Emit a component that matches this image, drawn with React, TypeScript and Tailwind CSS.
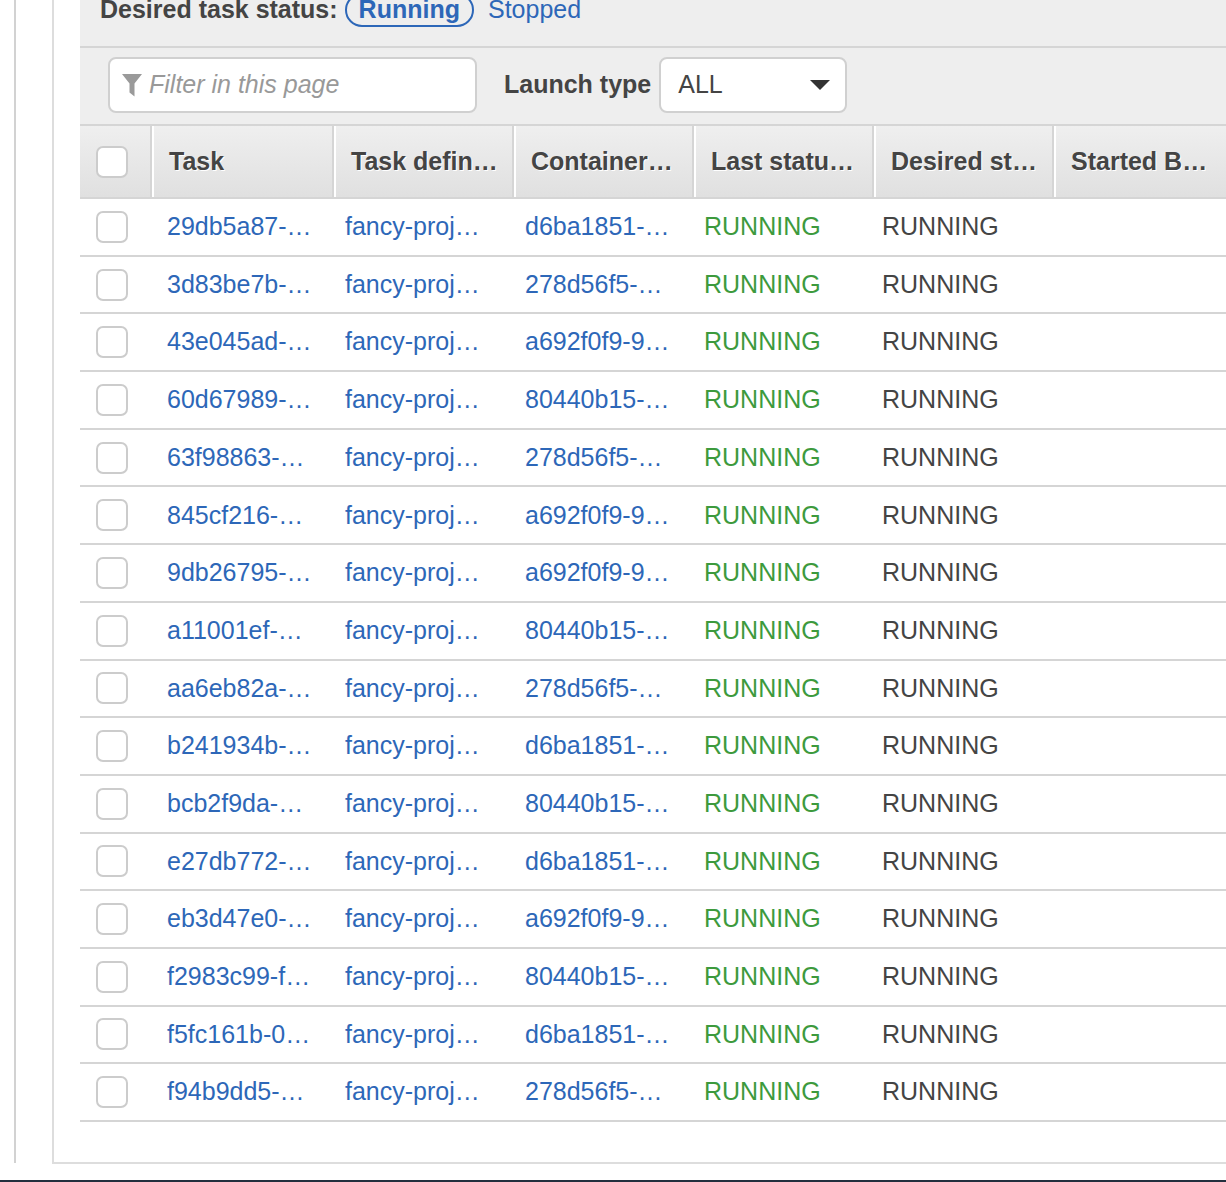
import React from "react";

const rows: [string, string, string][] = [
  ["29db5a87-…", "fancy-proj…", "d6ba1851-…"],
  ["3d83be7b-…", "fancy-proj…", "278d56f5-…"],
  ["43e045ad-…", "fancy-proj…", "a692f0f9-9…"],
  ["60d67989-…", "fancy-proj…", "80440b15-…"],
  ["63f98863-…", "fancy-proj…", "278d56f5-…"],
  ["845cf216-…", "fancy-proj…", "a692f0f9-9…"],
  ["9db26795-…", "fancy-proj…", "a692f0f9-9…"],
  ["a11001ef-…", "fancy-proj…", "80440b15-…"],
  ["aa6eb82a-…", "fancy-proj…", "278d56f5-…"],
  ["b241934b-…", "fancy-proj…", "d6ba1851-…"],
  ["bcb2f9da-…", "fancy-proj…", "80440b15-…"],
  ["e27db772-…", "fancy-proj…", "d6ba1851-…"],
  ["eb3d47e0-…", "fancy-proj…", "a692f0f9-9…"],
  ["f2983c99-f…", "fancy-proj…", "80440b15-…"],
  ["f5fc161b-0…", "fancy-proj…", "d6ba1851-…"],
  ["f94b9dd5-…", "fancy-proj…", "278d56f5-…"],
];

const headers = ["Task", "Task defin…", "Container…", "Last statu…", "Desired st…", "Started B…"];
const headerWidths = ["w-[182px]", "w-[180px]", "w-[180px]", "w-[180px]", "w-[180px]", "w-[200px]"];

function Checkbox() {
  return <div className="w-[32px] h-[32px] rounded-[7px] border-2 border-[#cccccc] bg-white shrink-0" />;
}

function FilterIcon() {
  return (
    <svg width="20" height="23" viewBox="0 0 20 23" className="shrink-0">
      <path d="M0 0 H20 L12.5 9.5 V22.5 L7.5 18.5 V9.5 Z" fill="#9a9a9a" />
    </svg>
  );
}

export default function App() {
  return (
    <div className="w-[1226px] h-[1182px] overflow-hidden bg-white flex flex-col text-[25px] text-[#444444] font-['Liberation_Sans',Arial,sans-serif]">
      <div className="flex h-[1164px] shrink-0">
        <div className="w-[14px] shrink-0" />
        <div className="w-[2px] h-[1163px] bg-[#d2d2d2] shrink-0" />
        <div className="w-[36px] shrink-0" />
        <div className="flex-1 min-w-0 border-l-2 border-b-2 border-[#dddddd] pl-[26px] overflow-hidden">
          <div className="w-[1200px] flex flex-col">
            {/* Desired task status bar */}
            <div className="h-[48px] bg-[#eeeeee] border-b-2 border-[#d5d5d5] pl-[20px] flex items-start">
              <div className="-mt-[7px] h-[34px] flex items-center">
                <span className="font-bold text-[#444444]">Desired task status:</span>
                <span className="ml-[7px] h-[34px] px-[12px] rounded-full border-2 border-[#2d67b8] text-[#2d67b8] font-bold flex items-center">Running</span>
                <span className="ml-[14px] text-[#2d67b8]">Stopped</span>
              </div>
            </div>
            {/* Filter row */}
            <div className="h-[76px] bg-[#eeeeee] pl-[28px] pt-[9px] flex items-start">
              <div className="w-[369px] h-[56px] bg-white border-2 border-[#d0d0d0] rounded-[8px] flex items-center pl-[12px] gap-[7px]">
                <FilterIcon />
                <span className="italic text-[#999999]">Filter in this page</span>
              </div>
              <div className="h-[56px] flex items-center ml-[27px] font-bold text-[#444444]">Launch type</div>
              <div className="ml-[8px] w-[188px] h-[56px] bg-white border-2 border-[#d0d0d0] rounded-[8px] flex items-center justify-between pl-[17px] pr-[15px]">
                <span className="text-[#444444]">ALL</span>
                <svg width="20" height="10" viewBox="0 0 20 10">
                  <path d="M0 0 H20 L10 10 Z" fill="#333333" />
                </svg>
              </div>
            </div>
            {/* Table header */}
            <div className="flex h-[75px] border-t-2 border-b-2 border-[#d5d5d5] bg-gradient-to-b from-[#efefef] to-[#e0e0e0]">
              <div className="w-[70px] shrink-0 flex items-center pl-[16px]">
                <Checkbox />
              </div>
              {headers.map((h, i) => (
                <div
                  key={h}
                  className={`${headerWidths[i]} shrink-0 border-l-2 border-[#d5d5d5] shadow-[inset_2px_0_0_#ffffff] flex items-center pl-[17px] overflow-hidden whitespace-nowrap font-bold text-[#444444] [text-shadow:1px_1px_0_#ffffff]`}
                >
                  {h}
                </div>
              ))}
            </div>
            {/* Rows */}
            {rows.map((r, i) => (
              <div key={i} className="flex h-[57.7px] border-b-2 border-[#d5d5d5] bg-white whitespace-nowrap">
                <div className="w-[70px] shrink-0 flex items-center pl-[16px]">
                  <Checkbox />
                </div>
                <div className="w-[182px] shrink-0 flex items-center pl-[17px] text-[#2d67b8]">{r[0]}</div>
                <div className="w-[180px] shrink-0 flex items-center pl-[13px] text-[#2d67b8]">{r[1]}</div>
                <div className="w-[180px] shrink-0 flex items-center pl-[13px] text-[#2d67b8]">{r[2]}</div>
                <div className="w-[180px] shrink-0 flex items-center pl-[12px] text-[#3d9a3d]">RUNNING</div>
                <div className="w-[180px] shrink-0 flex items-center pl-[10px] text-[#444444]">RUNNING</div>
                <div className="w-[200px] shrink-0" />
              </div>
            ))}
          </div>
        </div>
      </div>
      <div className="flex-1" />
      <div className="h-[2px] bg-[#232f3e] shrink-0" />
    </div>
  );
}
